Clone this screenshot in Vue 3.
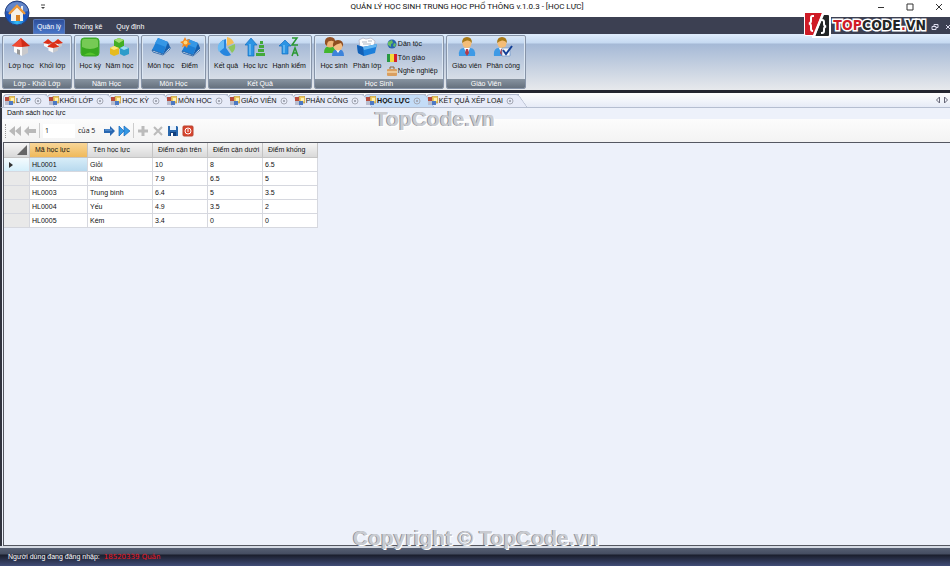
<template>
    <div class="window">
        <header class="titlebar">
            <button class="orb" aria-label="Menu">
                <svg viewBox="0 0 26 26">
                    <defs>
                        <radialGradient id="orb" cx="50%" cy="90%" r="85%">
                            <stop offset="0" stop-color="#35c4fa" />
                            <stop offset="0.45" stop-color="#1450c0" />
                            <stop offset="1" stop-color="#3560b4" />
                        </radialGradient>
                    </defs>
                    <circle cx="13" cy="13" r="12" fill="url(#orb)" stroke="#27407c" />
                    <path d="M2 11a11 9 0 0 1 22 0q-11 4-22 0" fill="#fff" opacity="0.25" />
                    <path d="M7 13v8h12v-8l-6-6z" fill="#f5f1e8" />
                    <path d="M12 15h4v6h-4z" fill="#d88325" />
                    <path d="M17 6h2v5h-2z" fill="#eee" />
                    <path d="M5 14l8-8 8 8" fill="none" stroke="#f09a38" stroke-width="2.4" />
                </svg>
            </button>
            <button class="quick" aria-label="Customize">
                <svg viewBox="0 0 6 6"><path d="M1 .5h4v1H1zM1 3h4L3 5z" fill="#444" /></svg>
            </button>
            <h1>QUẢN LÝ HỌC SINH TRUNG HỌC PHỔ THÔNG v.1.0.3 - [HỌC LỰC]</h1>
            <div class="controls">
                <button aria-label="Minimize"><svg viewBox="0 0 8 8"><path d="M1 4.500h6" /></svg></button>
                <button aria-label="Maximize"><svg viewBox="0 0 8 8"><path d="M1 1h6v6H1z" /></svg></button>
                <button aria-label="Close"><svg viewBox="0 0 8 8"><path d="M1 1l6 6M7 1L1 7" /></svg></button>
            </div>
        </header>

        <nav class="menubar">
            <button v-for="menu in menus" :key="menu" :class="{ active: menu === activeMenu }" @click="activeMenu = menu">
                {{ menu }}
            </button>
            <div class="mdi">
                <button aria-label="Restore"><svg viewBox="0 0 8 8"><path d="M1 3.500h4v3H1zM3 3V1.500h4v3H5" /></svg></button>
                <button aria-label="Close tab"><svg viewBox="0 0 8 8"><path d="M2 2l4 4M6 2L2 6" /></svg></button>
            </div>
            <div class="brand">
                <svg viewBox="0 0 28 26">
                    <path d="M1 1Q1 0 2 0h23q3 0 3 3v20q0 3-3 3H9v-2H3q-2 0-2-2z" fill="#fff" />
                    <path d="M2 1h17L10 23H3q-1 0-1-1z" fill="#cf1b26" />
                    <path d="M21 3h4q1 0 1 1v19q0 1-1 1H12z" fill="#222526" />
                    <path d="M19 1h2l-9 24h-2z" fill="#fff" />
                    <path d="M11 4H9.500Q8 4 8 6v3q0 2-2 2.500Q8 12 8 14v3q0 2 2 2" fill="none" stroke="#fff" stroke-width="2" />
                    <path d="M18 8h1q2 0 2 2v2q0 2 2 2.500-2 .500-2 2.500v2q0 2-2 2h-1" fill="none" stroke="#fff" stroke-width="2" />
                </svg>
                <span><b>TOP</b>CODE<b>.</b>VN</span>
            </div>
        </nav>

        <section class="ribbon">
            <div v-for="group in groups" :key="group.title" class="group" :class="group.size">
                <div class="tools">
                    <button v-for="tool in group.tools" :key="tool.label" class="tool">
                        <svg viewBox="0 0 20 20" v-html="icons[tool.icon]"></svg>
                        <span>{{ tool.label }}</span>
                    </button>
                    <div v-if="group.list" class="list">
                        <button v-for="item in group.list" :key="item.label">
                            <svg viewBox="0 0 10 10" v-html="icons[item.icon]"></svg>
                            <span>{{ item.label }}</span>
                        </button>
                    </div>
                </div>
                <h2>{{ group.title }}</h2>
            </div>
        </section>

        <div class="tabs">
            <button v-for="tab in tabs" :key="tab" class="tab" :class="{ active: tab === activeTab }" @click="activeTab = tab">
                <svg class="form" viewBox="0 0 10 10" v-html="icons.form"></svg>
                <span>{{ tab }}</span>
                <svg class="close" viewBox="0 0 8 8">
                    <circle cx="4" cy="4" r="3" /><path d="M3 3l2 2M5 3L3 5" />
                </svg>
            </button>
            <div class="scroll">
                <button aria-label="Previous"><svg viewBox="0 0 6 8"><path d="M4.500 1v6L1.500 4z" /></svg></button>
                <button aria-label="Next"><svg viewBox="0 0 6 8"><path d="M1.500 1v6l3-3z" /></svg></button>
            </div>
        </div>

        <main class="panel">
            <h3>Danh sách học lực</h3>
            <div class="toolbar">
                <i class="grip"></i>
                <button aria-label="First"><svg viewBox="0 0 12 12" v-html="icons.first"></svg></button>
                <button aria-label="Back"><svg viewBox="0 0 12 12" v-html="icons.back"></svg></button>
                <i class="line"></i>
                <input v-model="position" aria-label="Position" />
                <span>của 5</span>
                <button aria-label="Forward"><svg viewBox="0 0 12 12" v-html="icons.forward"></svg></button>
                <button aria-label="Last"><svg viewBox="0 0 12 12" v-html="icons.last"></svg></button>
                <i class="line"></i>
                <button aria-label="Add"><svg viewBox="0 0 12 12" v-html="icons.add"></svg></button>
                <button aria-label="Delete"><svg viewBox="0 0 12 12" v-html="icons.remove"></svg></button>
                <button aria-label="Save"><svg viewBox="0 0 12 12" v-html="icons.save"></svg></button>
                <button aria-label="Exit"><svg viewBox="0 0 12 12" v-html="icons.exit"></svg></button>
            </div>
            <div class="grid">
                <table>
                    <colgroup>
                        <col class="c-head" /><col class="c-code" /><col class="c-name" />
                        <col class="c-mark" /><col class="c-mark" /><col class="c-mark" />
                    </colgroup>
                    <thead>
                        <tr>
                            <th class="corner"><svg viewBox="0 0 10 10"><path d="M10 0v10H0z" fill="#666" /></svg></th>
                            <th v-for="(column, i) in columns" :key="column" :class="{ sorted: i === 0 }">{{ column }}</th>
                        </tr>
                    </thead>
                    <tbody>
                        <tr v-for="(row, i) in rows" :key="row[0]" :class="{ current: i === 0 }">
                            <th><svg v-if="i === 0" viewBox="0 0 4 6"><path d="M0 0v6l4-3z" fill="#333" /></svg></th>
                            <td v-for="(cell, j) in row" :key="j">{{ cell }}</td>
                        </tr>
                    </tbody>
                </table>
            </div>
        </main>

        <footer class="status">
            <span>Người dùng đang đăng nhập:</span>
            <strong>18520339 Quân</strong>
        </footer>

        <div class="mark top">TopCode.vn</div>
        <div class="mark bottom">Copyright © TopCode.vn</div>
    </div>
</template>

<script setup>
import { ref } from "vue";

const menus = ["Quản lý", "Thống kê", "Quy định"];
const activeMenu = ref("Quản lý");

const tabs = ["LỚP", "KHỐI LỚP", "HỌC KỲ", "MÔN HỌC", "GIÁO VIÊN", "PHÂN CÔNG", "HỌC LỰC", "KẾT QUẢ XẾP LOẠI"];
const activeTab = ref("HỌC LỰC");

const position = ref("1");

const groups = [
    {
        title: "Lớp - Khối Lớp",
        size: "w-md",
        tools: [
            { label: "Lớp học", icon: "house" },
            { label: "Khối lớp", icon: "houses" },
        ],
    },
    {
        title: "Năm Học",
        size: "w-sm",
        tools: [
            { label: "Học kỳ", icon: "green" },
            { label: "Năm học", icon: "cubes" },
        ],
    },
    {
        title: "Môn Học",
        size: "w-sm",
        tools: [
            { label: "Môn học", icon: "book" },
            { label: "Điểm", icon: "bookNew" },
        ],
    },
    {
        title: "Kết Quả",
        size: "w-lg",
        tools: [
            { label: "Kết quả", icon: "pie" },
            { label: "Học lực", icon: "rank" },
            { label: "Hạnh kiểm", icon: "sort" },
        ],
    },
    {
        title: "Học Sinh",
        size: "w-xl",
        tools: [
            { label: "Học sinh", icon: "people" },
            { label: "Phân lớp", icon: "box" },
        ],
        list: [
            { label: "Dân tộc", icon: "globe" },
            { label: "Tôn giáo", icon: "flag" },
            { label: "Nghề nghiệp", icon: "case" },
        ],
    },
    {
        title: "Giáo Viên",
        size: "w-last",
        tools: [
            { label: "Giáo viên", icon: "teacher" },
            { label: "Phân công", icon: "assign" },
        ],
    },
];

const columns = ["Mã học lực", "Tên học lực", "Điểm cận trên", "Điểm cận dưới", "Điểm khống"];
const rows = [
    ["HL0001", "Giỏi", "10", "8", "6.5"],
    ["HL0002", "Khá", "7.9", "6.5", "5"],
    ["HL0003", "Trung bình", "6.4", "5", "3.5"],
    ["HL0004", "Yếu", "4.9", "3.5", "2"],
    ["HL0005", "Kém", "3.4", "0", "0"],
];

const house = '<path d="M3 8h8v11l-8-4z" fill="#fafafa"/><path d="M11 9h6v7l-6 3z" fill="#c9c9cc"/><path d="M10 1l9 8-8 1-10-1z" fill="#d02a16"/><path d="M10 1l1 9-10-1z" fill="#ef4a34"/><path d="M6 12l3 1v5l-3-1z" fill="#999"/>';
const smallHouse = '<path d="M2 4h4v5L2 7z" fill="#fafafa"/><path d="M6 4h4v3L6 9z" fill="#c8c8cc"/><path d="M6 0l5 4-5 1-5-1z" fill="#dc3018"/>';
const book = '<path d="M7 1l10 4-5 12L1 13z" fill="#1d7fd6"/><path d="M7 1l10 4-2 5L4 6z" fill="#3597e6"/><path d="M12 17l7-7v2l-7 6-10-3-1-2z" fill="#f0f3f8" stroke="#14559e" stroke-width=".8"/><path d="M17 5l2 5-7 7z" fill="#1560af"/>';
const person = '<path d="M2 19q-1-8 5-8h6q6 0 5 8z" fill="#3e9ae6"/><path d="M7 11h6l-3 7z" fill="#fff"/><path d="M9 12h2l1 4-2 3-2-3z" fill="#b33a48"/><circle cx="10" cy="6.500" r="4.500" fill="#f4bd78"/><path d="M5 6q0-6 5-6t5 6q-2-3-5-2.500T5 6" fill="#a87a18"/>';

const icons = {
    house,
    houses: `<g transform="translate(-1 2)">${smallHouse}</g><g transform="translate(9 2)">${smallHouse}</g><g transform="translate(3 5) scale(1.200)">${smallHouse}</g>`,
    green: '<rect x="1" y="1" width="18" height="18" rx="3" fill="#37a81f" stroke="#43ad30"/><path d="M2 4q0-2 2-2h12q2 0 2 2v6Q10 14 2 10z" fill="#76ca55"/><path d="M4 18q6-5 12 0z" fill="#55c32d"/>',
    cubes: '<path d="M5 3l5-2 5 2v6l-5 3-5-3z" fill="#43ae24"/><path d="M5 3l5-2 5 2-5 3z" fill="#a0dc70"/><path d="M1 11l4-2 5 2v6l-5 2-4-2z" fill="#e6bb20"/><path d="M1 11l4-2 5 2-5 2z" fill="#fae778"/><path d="M11 11l4-2 5 2v6l-5 2-4-2z" fill="#2e9cca"/><path d="M11 11l4-2 5 2-5 2z" fill="#a0def4"/>',
    book,
    bookNew: `<g transform="translate(1 1)">${book}</g><path d="M5 0l1.500 3L10 2 8.500 5 11 7 8 8l-1 3-2-2-3 1 1-3-3-2 3-1z" fill="#f48a20"/><circle cx="5.500" cy="5.500" r="2" fill="#ffd779"/>`,
    pie: '<path d="M10 2a8.500 8.500 0 1 0 5 16l-5-7z" fill="#2685df"/><path d="M3 15a8 8 0 0 1 5-12v8z" fill="#6abcf5"/><path d="M11 9V0a9 9 0 0 1 7 6z" fill="#f2bd58"/><path d="M12 10l7-3q1 6-3 9z" fill="#8dc65e"/>',
    rank: '<path d="M6 1l6 7H9v11H3V8H0z" fill="#2b94e4" stroke="#1670c3" stroke-width=".7"/><path d="M5 7v11" stroke="#5fb4f0" stroke-width="2"/><path d="M15 4h3v3h-3zM14 8h5v3h-5zM13 12h6v3h-6zM11 16h9v3h-9z" fill="#43a93b"/>',
    sort: '<path d="M6 3l6 6H9v8H3V9H0z" fill="#2b94e4" stroke="#1670c3" stroke-width=".7"/><path d="M5 8v8" stroke="#5fb4f0" stroke-width="2"/><path d="M13 1h5l-5 7h6M13 19l3-8 3 8M14 16h4" fill="none" stroke="#299832" stroke-width="1.500"/>',
    people: '<path d="M0 16q0-7 6-7 5 0 6 7z" fill="#42b62d"/><circle cx="6" cy="6" r="4.500" fill="#efb477"/><path d="M1 7q-1-7 5-7 6 0 5 6-2-3-5-2-3 0-3 5z" fill="#945226"/><path d="M8 19q0-7 6-7 6 0 6 7z" fill="#3c83db"/><path d="M12 13h4l-2 3z" fill="#fff"/><circle cx="14" cy="9" r="4.500" fill="#f2bd83"/><path d="M9 10q-1-7 5-7 6 0 5 7l-2-4q-5 1-8 4" fill="#8f4d20"/>',
    box: '<path d="M2 3l4-2 3 1 5-1 4 3-1 6H3z" fill="#fff" stroke="#aab" stroke-width=".7"/><path d="M5 5h5M11 4h4M6 7h8" stroke="#aeb7c3"/><path d="M0 8l6 2 14-3-2 9-11 3-6-3z" fill="#1c7fdb"/><path d="M0 8l6 2 1 9-6-3z" fill="#1260b6"/><path d="M6 10l14-3-1 3-12 3z" fill="#66b8f2"/>',
    teacher: person,
    assign: `<g transform="translate(-1)">${person}</g><path d="M9 11h8v8H9z" fill="#f4f6fa" stroke="#7395c4" stroke-width=".7"/><path d="M10 13l3 4 6-8" fill="none" stroke="#123f96" stroke-width="2"/>`,
    globe: '<circle cx="5" cy="5" r="4.500" fill="#2864b0"/><path d="M1 3l4-2 1 3-2 1v3L1 6zM7 4l2 1-1 3-2-1z" fill="#65bd60"/>',
    flag: '<path d="M0 1h3v8H0z" fill="#279843"/><path d="M3 1h4v8H3z" fill="#f3db3a"/><path d="M7 1h3v8H7z" fill="#d3202d"/>',
    case: '<path d="M3 3V1h4v2" fill="none" stroke="#8d6539"/><rect y="3" width="10" height="7" rx="1" fill="#d99f60"/><path d="M0 6h10" stroke="#fff0cf"/>',
    form: '<path d="M4 0h6v7H4z" fill="#efca5c" stroke="#9a8353" stroke-width=".6"/><path d="M0 1h4v4H0z" fill="#b94b3c"/><path d="M4 5h4v4H4z" fill="#4d79c3"/><path d="M0 5h4v4H0z" fill="#b9bdce"/><path d="M6 2h3v3H6z" fill="#fff1ae"/>',
    first: '<path d="M6 1v10L0 6zM12 1v10L6 6z" fill="#b9b9b9"/>',
    back: '<path d="M0 6l5-5v3h7v4H5v3z" fill="#b9b9b9"/>',
    forward: '<path d="M12 6L7 1v3H1v4h6v3z" fill="#2967b1"/><path d="M2 5h7" stroke="#6ba4df"/>',
    last: '<path d="M1 1v10l5-5zM6 1v10l6-5z" fill="#3499e5" stroke="#1767bb" stroke-width=".7"/>',
    add: '<path d="M6 1v10M1 6h10" stroke="#bbb" stroke-width="3"/>',
    remove: '<path d="M2 2l8 8M10 2l-8 8" stroke="#bbb" stroke-width="2"/>',
    save: '<path d="M1 1h9l1 1v9H1z" fill="#2867ad"/><path d="M3 1h6v4H3z" fill="#e9f2fc"/><path d="M3 7h6v4H3z" fill="#123f7d"/><path d="M4 8h2v3H4z" fill="#fff"/>',
    exit: '<rect x="1" y="1" width="10" height="10" rx="1" fill="#d9432c" stroke="#b84430"/><circle cx="6" cy="6" r="3" fill="none" stroke="#fff"/><path d="M6 4v3" stroke="#fff"/>',
};
</script>

<style>
body {
    background: #24262f;
}
</style>
<style scoped>
.window {
    position: relative;
    display: flex;
    flex-direction: column;
    min-height: 100vh;
    box-sizing: border-box;
    font-family: "Liberation Sans", Arial, sans-serif;
    font-size: 7px;
    line-height: 10px;
    color: #111;
}
button {
    display: flex;
    align-items: center;
    justify-content: center;
    padding: 0;
    border: 0;
    background: none;
    font: inherit;
    color: inherit;
    white-space: nowrap;
}
h1,
h2,
h3 {
    margin: 0;
    font-size: inherit;
    font-weight: normal;
}
svg {
    display: block;
    flex: none;
}
.titlebar {
    display: flex;
    align-items: center;
    justify-content: center;
    height: 17px;
    padding-bottom: 3px;
    box-sizing: border-box;
    background: #fff;
}
.titlebar h1 {
    font-family: Roboto, sans-serif;
    font-size: 8px;
    margin-right: 16px;
}
.orb {
    position: absolute;
    z-index: 2;
    left: 4px;
    top: 0;
}
.orb svg {
    width: 26px;
    height: 26px;
}
.quick {
    position: absolute;
    left: 40px;
    top: 4px;
}
.quick svg {
    width: 6px;
    height: 6px;
}
.controls {
    position: absolute;
    right: 7px;
    top: 3px;
    display: flex;
    gap: 21px;
}
.controls svg {
    width: 8px;
    height: 8px;
    fill: none;
    stroke: #333;
}
.menubar {
    position: relative;
    display: flex;
    align-items: flex-end;
    height: 17px;
    padding-left: 33px;
    background: #3c4052;
    color: #fff;
}
.menubar > button {
    height: 15px;
    padding: 0 6px;
    margin-right: 2px;
    border-radius: 2px 2px 0 0;
}
.menubar > button.active {
    padding: 0 4px;
    background: linear-gradient(#2c4c98, #4a78ca);
    box-shadow: inset 0 0 0 1px #5878b8;
}
.mdi {
    display: flex;
    gap: 5px;
    margin-left: auto;
    margin-right: -2px;
    padding-bottom: 3px;
}
.mdi svg {
    width: 8px;
    height: 8px;
    fill: none;
    stroke: #dde;
}
.brand {
    position: absolute;
    z-index: 2;
    right: 24px;
    top: -5px;
    display: flex;
    align-items: center;
    color: #222526;
    font: bold 14px/26px "DejaVu Sans Condensed", "DejaVu Sans", sans-serif;
}
.brand svg {
    width: 28px;
    height: 26px;
    margin-right: 2px;
}
.brand span {
    -webkit-text-stroke: 3px #fff;
    paint-order: stroke fill;
}
.brand b {
    color: #cf1b26;
}
.ribbon {
    display: flex;
    gap: 2px;
    height: 56px;
    padding: 1px 2px;
    box-sizing: border-box;
    background: linear-gradient(#e0edfc, #c5d9f1 9px, #a5b9d6 10px, #e7e9ec);
}
.group {
    display: flex;
    flex-direction: column;
    box-sizing: border-box;
    border: 1px solid #8794a8;
    border-radius: 2px;
    overflow: hidden;
    box-shadow: inset 0 0 0 1px #dce7f3;
}
.w-sm {
    width: 65px;
}
.w-md {
    width: 70px;
}
.w-lg {
    width: 104px;
}
.w-xl {
    width: 130px;
}
.w-last {
    width: 80px;
}
.group h2 {
    height: 9px;
    line-height: 9px;
    text-align: center;
    color: #fff;
    background: linear-gradient(#8793a0, #66717e);
}
.tools {
    flex: 1;
    display: flex;
    justify-content: space-evenly;
}
.tool {
    flex-direction: column;
    justify-content: flex-start;
    padding-top: 1px;
    gap: 4px;
}
.tool svg {
    width: 20px;
    height: 20px;
}
.list {
    display: flex;
    flex-direction: column;
    justify-content: space-evenly;
}
.list button {
    gap: 1px;
    justify-content: flex-start;
}
.list svg {
    width: 10px;
    height: 10px;
}
.tabs {
    display: flex;
    align-items: flex-end;
    height: 18px;
    padding-left: 1px;
    box-sizing: border-box;
    border-top: 3px solid #252731;
    background: linear-gradient(#fff, #e6ebf6);
    border-left: 2px solid #30333e;
    border-bottom: 1px solid #b5bed0;
}
.tab {
    position: relative;
    height: 13px;
    padding: 0 5px 0 1px;
    gap: 1px;
    border: 1px solid #b0b8cb;
    border-width: 1px 0 0 1px;
    border-radius: 4px 0 0 0;
    background: #e7ebf8;
}
.tab::after {
    content: "";
    position: absolute;
    z-index: 1;
    top: -1px;
    right: -4px;
    width: 8px;
    height: 12px;
    border: 1px solid #b0b8cb;
    border-width: 1px 1px 0 0;
    border-radius: 0 3px 0 0;
    background: inherit;
    transform: skewX(35deg);
}
.tab > * {
    position: relative;
    z-index: 2;
}
.tab.active {
    background: #c4dcf7;
    font-weight: bold;
}
.form {
    width: 10px;
    height: 10px;
}
.close {
    width: 8px;
    height: 8px;
    margin-left: 2px;
    fill: none;
    stroke: #a6aab6;
}
.scroll {
    display: flex;
    gap: 2px;
    margin-left: auto;
    padding: 0 1px 3px 0;
}
.scroll svg {
    width: 6px;
    height: 8px;
    fill: none;
    stroke: #667;
}
.panel {
    flex: 1;
    display: flex;
    flex-direction: column;
    border-left: 2px solid #30333e;
    background: #edf1fa;
}
.panel h3 {
    padding-left: 5px;
    height: 11px;
}
.toolbar {
    display: flex;
    align-items: center;
    gap: 3px;
    height: 23px;
    padding-left: 3px;
    background: linear-gradient(#fcfcfc, #f3f3f3);
    font-family: "Open Sans", sans-serif;
}
.toolbar svg {
    width: 12px;
    height: 12px;
}
.grip {
    height: 14px;
    border-left: 1px dotted #999;
}
.line {
    height: 15px;
    border-left: 1px solid #ccc;
}
.toolbar input {
    width: 32px;
    height: 14px;
    box-sizing: border-box;
    padding: 0 2px;
    border: 0;
    background: #fff;
    font: inherit;
    color: inherit;
}
.toolbar span {
    margin-right: 5px;
}
.grid {
    flex: 1;
    margin-left: 1px;
    border: 1px solid #555861;
    border-right: 0;
}
table {
    table-layout: fixed;
    width: 314px;
    border-collapse: separate;
    border-spacing: 0;
    background: #fff;
}
.c-head {
    width: 26px;
}
.c-code {
    width: 58px;
}
.c-name {
    width: 65px;
}
.c-mark {
    width: 55px;
}
th,
td {
    height: 14px;
    padding: 0 2px;
    box-sizing: border-box;
    border: 1px solid #d6d8df;
    border-width: 0 1px 1px 0;
    line-height: 10px;
    text-align: left;
    font-weight: normal;
    white-space: nowrap;
}
thead th {
    height: 15px;
    padding-left: 5px;
    background: linear-gradient(#f5f5f5, #d9d9d9);
    border-color: #c4c4c4;
}
thead th.sorted {
    background: linear-gradient(#f8d698, #efb95a);
}
tbody th {
    background: #e9e9e9;
    padding-left: 5px;
}
.corner svg {
    width: 10px;
    height: 10px;
    margin-left: auto;
}
tbody th svg {
    width: 4px;
    height: 6px;
}
.current th {
    background: linear-gradient(#f5fbfe, #d5effb);
}
.current td:nth-child(2) {
    background: linear-gradient(#d8edf8, #b7d9ee);
}
.status {
    display: flex;
    align-items: center;
    gap: 4px;
    height: 18px;
    padding-left: 8px;
    border-top: 2px solid #d5dae3;
    background: linear-gradient(#565f72, #454d61 6px, #1a1e2c 7px, #414d77);
    color: #fff;
}
.status strong {
    font-family: "DejaVu Sans", Verdana, sans-serif;
    font-weight: normal;
    color: #f01420;
}
.mark {
    position: absolute;
    z-index: 3;
    font-size: 21px;
    line-height: 24px;
    font-weight: bold;
    color: #c9cbd0;
    text-shadow: -1px 0 #8c8f96, 1px 1px #fff;
    pointer-events: none;
    white-space: nowrap;
}
.top {
    left: 375px;
    top: 107px;
}
.bottom {
    left: 353px;
    bottom: 16px;
}
</style>
